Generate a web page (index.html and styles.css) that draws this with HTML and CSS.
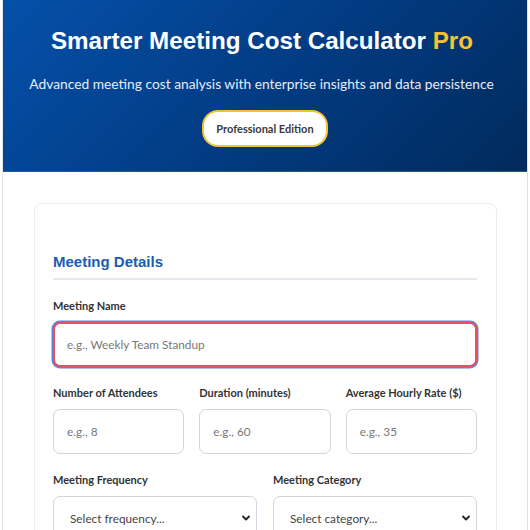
FILE: index.html
```html
<!DOCTYPE html>
<html lang="en">
<head>
<meta charset="utf-8">
<title>Smarter Meeting Cost Calculator Pro</title>
<link rel="stylesheet" href="styles.css">
</head>
<body>
<div class="app">
  <header class="hero">
    <h1 class="hero-title">Smarter Meeting Cost Calculator <span class="pro">Pro</span></h1>
    <p class="hero-sub">Advanced meeting cost analysis with enterprise insights and data persistence</p>
    <div class="badge">Professional Edition</div>
  </header>
  <main class="content">
    <section class="card">
      <h2 class="section-title">Meeting Details</h2>
      <div class="field">
        <label class="label" for="mname">Meeting Name</label>
        <input class="input input-focus" id="mname" type="text" placeholder="e.g., Weekly Team Standup">
      </div>
      <div class="row row-3">
        <div class="field">
          <label class="label" for="att">Number of Attendees</label>
          <input class="input" id="att" type="text" placeholder="e.g., 8">
        </div>
        <div class="field">
          <label class="label" for="dur">Duration (minutes)</label>
          <input class="input" id="dur" type="text" placeholder="e.g., 60">
        </div>
        <div class="field">
          <label class="label" for="rate">Average Hourly Rate ($)</label>
          <input class="input" id="rate" type="text" placeholder="e.g., 35">
        </div>
      </div>
      <div class="row row-2">
        <div class="field">
          <label class="label" for="freq">Meeting Frequency</label>
          <div class="select-wrap">
            <select class="input select" id="freq"><option>Select frequency...</option></select>
            <svg class="chev" width="10" height="10" viewBox="0 0 10 10"><path d="M2 3.5 L5 6.5 L8 3.5" fill="none" stroke="#222" stroke-width="1.8" stroke-linecap="round" stroke-linejoin="round"/></svg>
          </div>
        </div>
        <div class="field">
          <label class="label" for="cat">Meeting Category</label>
          <div class="select-wrap">
            <select class="input select" id="cat"><option>Select category...</option></select>
            <svg class="chev" width="10" height="10" viewBox="0 0 10 10"><path d="M2 3.5 L5 6.5 L8 3.5" fill="none" stroke="#222" stroke-width="1.8" stroke-linecap="round" stroke-linejoin="round"/></svg>
          </div>
        </div>
      </div>
    </section>
  </main>
</div>
</body>
</html>
```

FILE: styles.css
```css
* { box-sizing: border-box; }
html, body { margin: 0; padding: 0; background: #fff; }
body {
  padding: 0 2px;
  font-family: Lato, "Noto Sans", sans-serif;
  color: #333;
  overflow: hidden;
  height: 530px;
}
.app {
  border-left: 1px solid #e2e2e2;
  border-right: 1px solid #e2e2e2;
  min-height: 530px;
}
.hero {
  height: 172px;
  background: linear-gradient(135deg, #0550aa 0%, #023c84 50%, #012a5c 100%);
  border-bottom: 1px solid #1a5aa8;
  text-align: center;
  padding-top: 26px;
}
.hero-title {
  margin: 0;
  padding-right: 6px;
  font-family: "Liberation Sans", Arial, sans-serif;
  font-weight: 700;
  font-size: 24.2px;
  line-height: 30px;
  color: #fff;
}
.pro { color: #f7c22e; }
.hero-sub {
  margin: 18px 0 0;
  padding-right: 7px;
  font-size: 13.8px;
  line-height: 20px;
  color: #e6edf7;
}
.badge {
  display: inline-block;
  margin-top: 16px;
  width: 126px;
  height: 37px;
  line-height: 33px;
  border: 2px solid #f2c233;
  border-radius: 16px;
  background: #fff;
  color: #3a3a3a;
  font-size: 11px;
  font-weight: 700;
}
.content { padding: 31px 30px 0 31px; }
.card {
  border: 1px solid #ececec;
  border-radius: 8px;
  padding: 48px 19px 20px 18px;
}
.section-title {
  margin: 0 0 18px;
  font-family: "Liberation Sans", Arial, sans-serif;
  font-weight: 700;
  font-size: 15px;
  line-height: 20px;
  color: #1a5cb4;
  padding-bottom: 6px;
  border-bottom: 2px solid #e6e8ee;
}
.field { margin-bottom: 18px; min-width: 0; }
.label {
  display: block;
  font-size: 11px;
  font-weight: 700;
  line-height: 16px;
  margin-bottom: 8px;
  color: #333;
}
.input {
  display: block;
  width: 100%;
  height: 45px;
  border: 1px solid #cfd5dd;
  border-radius: 7px;
  padding: 0 13px;
  font-family: Lato, "Noto Sans", sans-serif;
  font-size: 11.8px;
  color: #333;
  background: #fff;
  outline: none;
}
.input::placeholder { color: #777; }
.input-focus {
  border: 2px solid #e8505e;
  box-shadow: 0 0 0 1.5px #5a86d6;
  padding-left: 12px;
}
.row { display: grid; }
.row-3 { grid-template-columns: 1fr 1fr 1fr; column-gap: 15px; }
.row-2 { grid-template-columns: 1fr 1fr; column-gap: 16px; }
.select-wrap { position: relative; }
.select {
  appearance: none;
  -webkit-appearance: none;
  padding-left: 16px;
  color: #444;
}
.chev { position: absolute; right: 6px; top: 17px; }
```
